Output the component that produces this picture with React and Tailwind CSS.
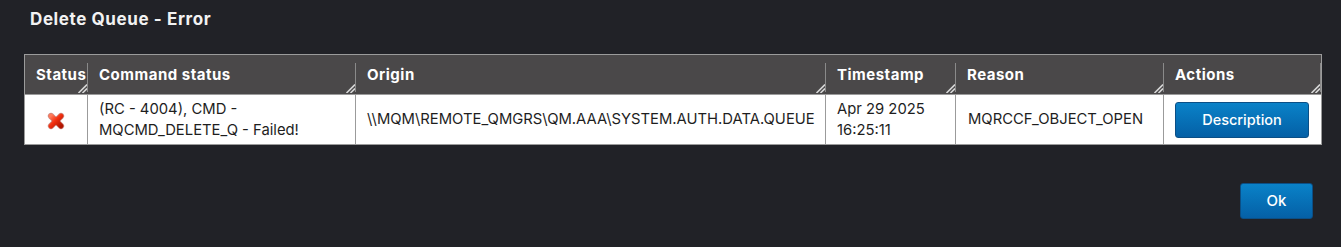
import React from "react";

function Grip() {
  return (
    <svg className="absolute right-[1px] bottom-[1px]" width="10" height="10" viewBox="0 0 10 10">
      <line x1="1.5" y1="10" x2="10" y2="1.5" stroke="#d8d8d8" strokeWidth="1.6" />
      <line x1="5.5" y1="10" x2="10" y2="5.5" stroke="#d8d8d8" strokeWidth="1.6" />
    </svg>
  );
}

function RedX() {
  return (
    <svg width="18" height="18" viewBox="0 0 18 18">
      <defs>
        <linearGradient id="rx" x1="0" y1="0" x2="1" y2="1">
          <stop offset="0" stopColor="#ff7a5a" />
          <stop offset="0.45" stopColor="#f23010" />
          <stop offset="1" stopColor="#b01500" />
        </linearGradient>
      </defs>
      <g stroke="#9a1200" strokeOpacity="0.5" strokeWidth="6.2" strokeLinecap="round">
        <line x1="4" y1="4" x2="14" y2="14" />
        <line x1="14" y1="4" x2="4" y2="14" />
      </g>
      <g stroke="url(#rx)" strokeWidth="4.8" strokeLinecap="round">
        <line x1="4" y1="4" x2="14" y2="14" />
        <line x1="14" y1="4" x2="4" y2="14" />
      </g>
    </svg>
  );
}

const cols = ["Status", "Command status", "Origin", "Timestamp", "Reason", "Actions"];

export default function App() {
  return (
    <div
      className="w-[1341px] h-[247px] bg-[#212227] text-white overflow-hidden"
      style={{ fontFamily: "Inter, 'Noto Sans', sans-serif" }}
    >
      <div className="pl-[30px] pt-[9px] h-[54px] text-[17px] tracking-[0.6px] font-bold leading-[20px] text-[#f2f2f2]">
        Delete Queue - Error
      </div>
      <div className="ml-[24px] w-[1298px] border border-[#9b9b9b] bg-white">
        <div className="grid grid-cols-[63px_268px_470px_130px_208px_157px] h-[40px] bg-[#4a4849] border-b border-[#9b9b9b]">
          {cols.map((c) => (
            <div key={c} className="relative flex items-center pl-[11px] pt-[2px] text-[15px] tracking-[0.5px] font-bold text-white">
              {c}
              <div className="absolute right-0 top-[8px] bottom-[2px] w-px bg-[#8a8a8a]" />
              <Grip />
            </div>
          ))}
        </div>
        <div className="grid grid-cols-[63px_268px_470px_130px_208px_157px] h-[49px] text-[14.8px] text-[#1e1e1e] leading-[21px]">
          <div className="flex items-center justify-center border-r border-[#9b9b9b] pt-[2px]">
            <RedX />
          </div>
          <div className="flex items-center pl-[11px] border-r border-[#9b9b9b]">
            <div>
              (RC - 4004), CMD -<br />MQCMD_DELETE_Q - Failed!
            </div>
          </div>
          <div className="flex items-center pl-[11px] border-r border-[#9b9b9b]">
            \\MQM\REMOTE_QMGRS\QM.AAA\SYSTEM.AUTH.DATA.QUEUE
          </div>
          <div className="flex items-center pl-[11px] border-r border-[#9b9b9b]">
            <div>
              Apr 29 2025<br />16:25:11
            </div>
          </div>
          <div className="flex items-center pl-[12px] border-r border-[#9b9b9b]">
            MQRCCF_OBJECT_OPEN
          </div>
          <div className="flex items-center pl-[11px]">
            <button className="w-[134px] h-[36px] rounded-[3px] border border-[#0b4f86] bg-gradient-to-b from-[#0a82c8] to-[#0560a6] text-white text-[14.5px] font-medium">
              Description
            </button>
          </div>
        </div>
      </div>
      <div className="flex justify-end pr-[28px] pt-[38px]">
        <button className="w-[73px] h-[36px] rounded-[3px] border border-[#0b4f86] bg-gradient-to-b from-[#0a82c8] to-[#0560a6] text-white text-[15px] font-medium">
          Ok
        </button>
      </div>
    </div>
  );
}
